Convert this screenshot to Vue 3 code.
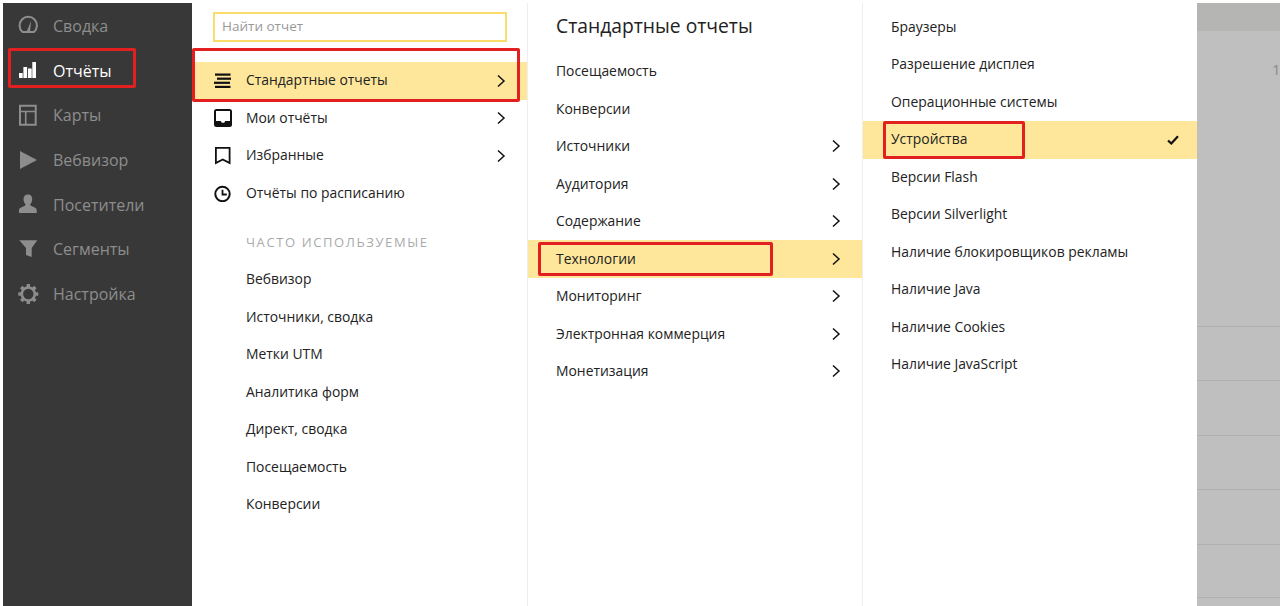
<script setup>
const nav = [
  { name: 'Сводка', icon: 'gauge' },
  { name: 'Отчёты', icon: 'bars', active: true },
  { name: 'Карты', icon: 'map' },
  { name: 'Вебвизор', icon: 'play' },
  { name: 'Посетители', icon: 'user' },
  { name: 'Сегменты', icon: 'funnel' },
  { name: 'Настройка', icon: 'gear' }
]

const mainItems = [
  { name: 'Стандартные отчеты', icon: 'stack', arrow: true, active: true },
  { name: 'Мои отчёты', icon: 'inbox', arrow: true },
  { name: 'Избранные', icon: 'bookmark', arrow: true },
  { name: 'Отчёты по расписанию', icon: 'clock' }
]

const frequent = ['Вебвизор', 'Источники, сводка', 'Метки UTM', 'Аналитика форм', 'Директ, сводка', 'Посещаемость', 'Конверсии']

const standard = [
  { name: 'Посещаемость' },
  { name: 'Конверсии' },
  { name: 'Источники', arrow: true },
  { name: 'Аудитория', arrow: true },
  { name: 'Содержание', arrow: true },
  { name: 'Технологии', arrow: true, active: true },
  { name: 'Мониторинг', arrow: true },
  { name: 'Электронная коммерция', arrow: true },
  { name: 'Монетизация', arrow: true }
]

const tech = ['Браузеры', 'Разрешение дисплея', 'Операционные системы', 'Устройства', 'Версии Flash', 'Версии Silverlight', 'Наличие блокировщиков рекламы', 'Наличие Java', 'Наличие Cookies', 'Наличие JavaScript']

const bgRows = [54, 55, 54, 55, 53, 55]
const gearTeeth = [0, 45, 90, 135, 180, 225, 270, 315]
</script>

<template>
  <div class="page">
    <aside class="sidebar">
      <div v-for="item in nav" :key="item.name" class="nav-row" :class="{ on: item.active }">
        <svg class="nav-icon" viewBox="0 0 22 22" fill="currentColor">
          <g v-if="item.icon === 'gauge'">
            <path d="M5.500 17 A8.700 8.700 0 1 1 17 17 Z" fill="none" stroke="currentColor" stroke-width="2" stroke-linejoin="round" />
            <path d="M9.500 17 L14 6 L13 17 Z" />
          </g>
          <g v-else-if="item.icon === 'bars'">
            <rect x="2" y="13" width="3.700" height="5" />
            <rect x="6.400" y="7" width="3.700" height="11" />
            <rect x="11" y="8.500" width="3.700" height="9.500" />
            <rect x="15.300" y="2" width="3.700" height="16" />
          </g>
          <g v-else-if="item.icon === 'map'" fill="none" stroke="currentColor" stroke-width="2">
            <rect x="3" y="1.750" width="15.700" height="19" />
            <path d="M3 7.500 H18.700 M8.700 7.500 V20" stroke-width="1.600" />
          </g>
          <path v-else-if="item.icon === 'play'" d="M3 2 L20 11 L3 20 Z" />
          <path v-else-if="item.icon === 'user'" d="M11 .5c2.800 0 4.200 2 4.200 4.800 0 2.200-.9 4-2 5 .1 1.200.7 1.700 2.300 2.300 2.500.9 4.200 1.700 4.200 3.400V19H2v-3c0-1.700 1.700-2.500 4.200-3.400 1.600-.6 2.200-1.100 2.300-2.300-1.100-1-2-2.800-2-5C6.500 2.500 8.200.5 11 .5z" />
          <path v-else-if="item.icon === 'funnel'" d="M2.300 2.300 H20.300 L14.700 10 V19 L9 17 V10 Z" />
          <g v-else-if="item.icon === 'gear'">
            <circle cx="11.300" cy="11" r="6.500" fill="none" stroke="currentColor" stroke-width="2.600" />
            <rect v-for="a in gearTeeth" :key="a" x="9.600" y="1" width="3.400" height="3.600" :transform="`rotate(${a} 11.300 11)`" />
          </g>
        </svg>
        <span>{{ item.name }}</span>
      </div>
    </aside>

    <section class="panel first">
      <div class="search">Найти отчет</div>
      <div v-for="item in mainItems" :key="item.name" class="row" :class="{ on: item.active }">
        <svg class="row-icon" viewBox="0 0 18 18" fill="#111">
          <g v-if="item.icon === 'stack'">
            <rect x="1" y="1.500" width="15.500" height="2.200" />
            <rect x="3" y="5.600" width="14" height="2.200" />
            <rect x="0" y="9.700" width="16" height="2.200" />
            <rect x="1" y="13.800" width="15.500" height="2.200" />
          </g>
          <path v-else-if="item.icon === 'inbox'" d="M2.500 0h13A2.500 2.500 0 0 1 18 2.500v13a2.500 2.500 0 0 1-2.500 2.500h-13A2.500 2.500 0 0 1 0 15.500v-13A2.500 2.500 0 0 1 2.500 0zM2 2v10h4.800l1 1.800h2.400l1-1.800H16V2z" fill-rule="evenodd" />
          <path v-else-if="item.icon === 'bookmark'" d="M1 0H16.500V17.500L8.750 13.500 1 17.500z M2.800 1.800V14.600L8.750 11.500 14.700 14.600V1.800z" fill-rule="evenodd" />
          <g v-else-if="item.icon === 'clock'">
            <circle cx="8.500" cy="10" r="7.200" fill="none" stroke="#111" stroke-width="2" />
            <path d="M8.500 5.800v4.700h4.300" fill="none" stroke="#111" stroke-width="1.800" />
          </g>
        </svg>
        <span class="row-text">{{ item.name }}</span>
        <svg v-if="item.arrow" class="chev" viewBox="0 0 10 14"><path d="M2 1.500 L8 7 L2 12.500" /></svg>
      </div>
      <div class="group-title">ЧАСТО ИСПОЛЬЗУЕМЫЕ</div>
      <div v-for="name in frequent" :key="name" class="row plain"><span class="row-text">{{ name }}</span></div>
    </section>

    <section class="panel second">
      <h2>Стандартные отчеты</h2>
      <div v-for="item in standard" :key="item.name" class="row" :class="{ on: item.active }">
        <span class="row-text">{{ item.name }}</span>
        <svg v-if="item.arrow" class="chev" viewBox="0 0 10 14"><path d="M2 1.500 L8 7 L2 12.500" /></svg>
      </div>
    </section>

    <section class="panel third">
      <div v-for="name in tech" :key="name" class="row" :class="{ on: name === 'Устройства' }">
        <span class="row-text">{{ name }}</span>
        <svg v-if="name === 'Устройства'" class="check" viewBox="0 0 12 10"><path d="M1 5.500 L4.300 8.500 L11 1.200" /></svg>
      </div>
    </section>

    <div class="dimmed">
      <div class="dim-head"></div>
      <div class="dim-top"><span>1</span></div>
      <div v-for="(h, i) in bgRows" :key="i" class="dim-row" :style="{ height: h + 'px' }"></div>
    </div>

    <div class="mark mark-nav"></div>
    <div class="mark mark-std"></div>
    <div class="mark mark-tech"></div>
    <div class="mark mark-dev"></div>
  </div>
</template>

<style>
html, body {
  margin: 0;
  background: #fff;
}
</style>

<style scoped>
.page {
  position: relative;
  display: flex;
  width: 1280px;
  height: 606px;
  box-sizing: border-box;
  padding: 3px 0 0 3px;
  overflow: hidden;
  background: #fff;
  font-family: "Open Sans", "Noto Sans", sans-serif;
  color: #222;
}

.sidebar {
  width: 189px;
  flex: none;
  box-sizing: border-box;
  padding-top: 0.5px;
  background: #383838;
}

.nav-row {
  display: flex;
  align-items: center;
  height: 44.7px;
  padding-left: 14px;
  font-size: 16px;
  color: #8d8d8d;
}

.nav-row.on {
  color: #fff;
}

.nav-icon {
  width: 22px;
  height: 22px;
  margin-right: 14px;
  flex: none;
}

.panel {
  width: 335px;
  flex: none;
  box-sizing: border-box;
  border-right: 1px solid #eeeeee;
}

.first {
  width: 336px;
}

.third {
  width: 334px;
  border-right: 0;
  padding-top: 5.500px;
}

.search {
  box-sizing: border-box;
  width: 294px;
  height: 30px;
  margin: 9px 0 20px 21px;
  padding-left: 7px;
  border: 2px solid #f9dc6a;
  color: #999;
  font-size: 13.500px;
  line-height: 24px;
}

.row {
  display: flex;
  align-items: center;
  height: 37.500px;
  padding-left: 28px;
  padding-right: 21px;
  font-size: 13.900px;
}

.first .row {
  padding-left: 22px;
}

.first .row.plain {
  padding-left: 54px;
}

.row.on {
  background: #fee79b;
}

.row-icon {
  width: 18px;
  height: 18px;
  margin-right: 14px;
  flex: none;
}

.row-text {
  flex: 1;
  margin-bottom: 2px;
  white-space: nowrap;
}

.second .row-text {
  margin-bottom: 1px;
}

.chev {
  width: 10px;
  height: 14px;
  fill: none;
  stroke: #111;
  stroke-width: 1.500;
}

.check {
  width: 12px;
  height: 10px;
  margin-right: -3px;
  fill: none;
  stroke: #111;
  stroke-width: 2.200;
}

.group-title {
  height: 34px;
  margin-top: 15px;
  padding-left: 54px;
  color: #aaa;
  font-size: 13px;
  letter-spacing: 1.600px;
  line-height: 30px;
}

h2 {
  height: 49.500px;
  margin: 0;
  padding-left: 28px;
  font-size: 19.300px;
  font-weight: 400;
  line-height: 46px;
  color: #222;
}

.dimmed {
  flex: 1;
  background: #bfbfbf;
}

.dim-head {
  height: 28px;
  background: #b5b5b3;
}

.dim-top {
  box-sizing: border-box;
  height: 295.500px;
  padding: 28px 0 0 75px;
  border-bottom: 1px solid #b0b0b0;
  color: #8a8a8a;
  font-size: 15px;
}

.dim-row {
  box-sizing: border-box;
  border-bottom: 1px solid #b0b0b0;
}

.mark {
  position: absolute;
  box-sizing: border-box;
  border: 3px solid #e2201f;
  border-radius: 2px;
}

.mark-nav {
  left: 8px;
  top: 48px;
  width: 128px;
  height: 40px;
}

.mark-std {
  left: 192px;
  top: 48px;
  width: 328px;
  height: 54px;
}

.mark-tech {
  left: 538px;
  top: 242px;
  width: 235px;
  height: 34px;
}

.mark-dev {
  left: 883px;
  top: 121px;
  width: 142px;
  height: 38px;
}
</style>
